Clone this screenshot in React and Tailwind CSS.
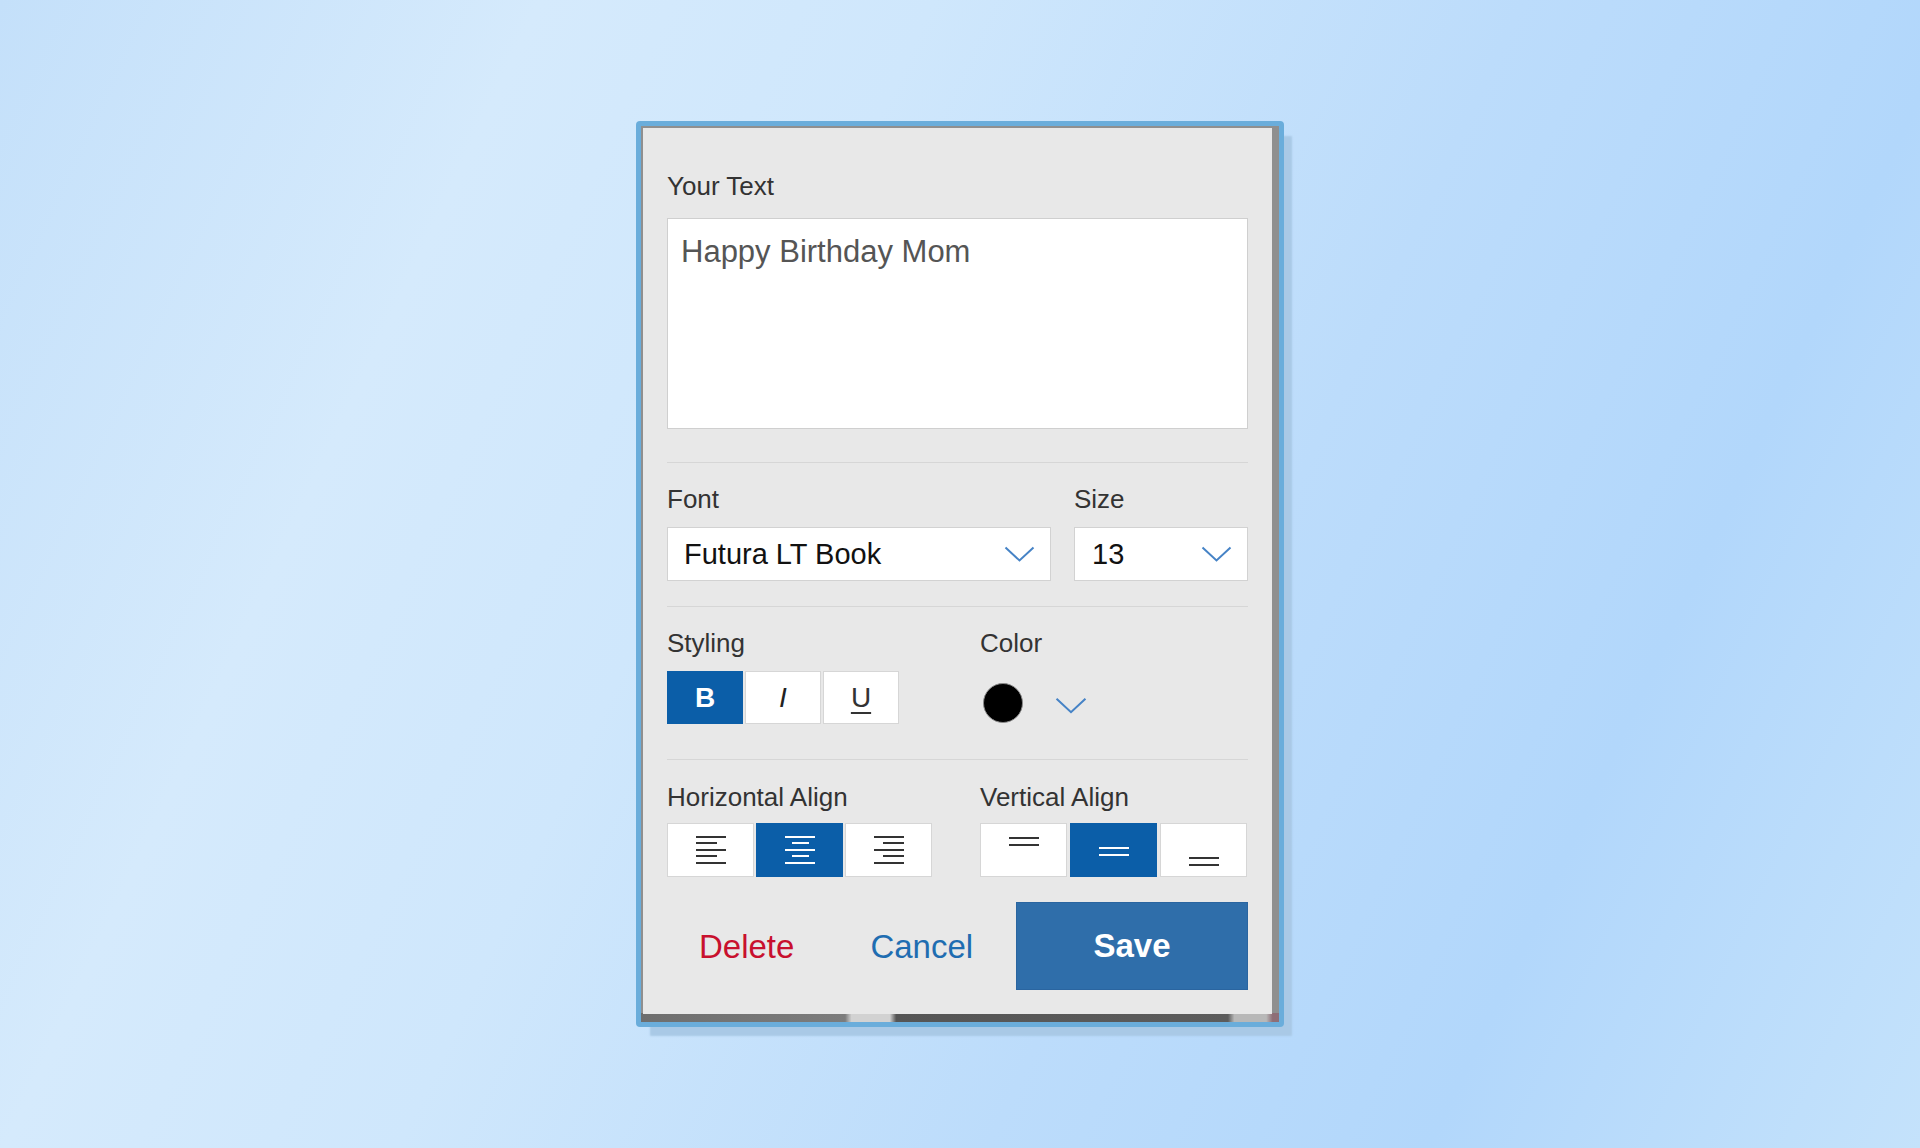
import React, { useState } from 'react';

const font = "font-['Liberation_Sans',Arial,Helvetica,sans-serif]";

function Chevron({ className = 'w-[31px] h-[16px]' }) {
  return (
    <svg className={className} viewBox="0 0 31 16" fill="none">
      <polyline points="1.5,1.5 15.5,14.5 29.5,1.5" stroke="#4683c6" strokeWidth="2" />
    </svg>
  );
}

// horizontal align glyphs: five bars, long/short alternating
function HAlignIcon({ kind, active }) {
  const c = active ? '#ffffff' : '#333333';
  const rows = [1, 7, 14, 20, 27];
  const short = kind === 'center' ? 17 : 21;
  return (
    <svg width="30" height="28" viewBox="0 0 30 28" shapeRendering="crispEdges">
      {rows.map((y, i) => {
        const long = i % 2 === 0;
        const w = long ? 30 : short;
        let x = 0;
        if (!long && kind === 'center') x = (30 - w) / 2;
        if (!long && kind === 'right') x = 30 - w;
        return <line key={i} x1={x} x2={x + w} y1={y} y2={y} stroke={c} strokeWidth="2" />;
      })}
    </svg>
  );
}

function VAlignIcon({ kind, active }) {
  const c = active ? '#ffffff' : '#333333';
  const ys = kind === 'top' ? [15, 22] : kind === 'middle' ? [25, 32] : [35, 42];
  return (
    <svg width="30" height="54" viewBox="0 0 30 54" shapeRendering="crispEdges">
      {ys.map((y) => (
        <line key={y} x1="0" x2="30" y1={y} y2={y} stroke={c} strokeWidth="2" />
      ))}
    </svg>
  );
}

function Label({ children }) {
  return <div className="text-[26px] leading-[26px] text-[#333]">{children}</div>;
}

export default function App() {
  const [text, setText] = useState('Happy Birthday Mom');
  const [hAlign, setHAlign] = useState('center');
  const [vAlign, setVAlign] = useState('middle');

  const seg = 'h-[54px] w-[87px] flex items-center justify-center border';
  const on = 'bg-[#0b5ea8] border-[#0b5ea8]';
  const off = 'bg-white border-[#d6d6d6]';

  return (
    <div
      className={`${font} w-full h-[1148px] flex items-center justify-center bg-[linear-gradient(115deg,#c4e0fa_0%,#d5eafc_22%,#cfe7fc_38%,#bcdcfb_62%,#b2d7fb_80%,#c4e2fb_100%)]`}
    >
      {/* blue frame around the screenshot */}
      <div className="w-[648px] h-[906px] rounded-[4px] bg-[#6aaddb] p-[5px] shadow-[11px_12px_2px_-3px_#a9c9e6]">
        {/* photo peeking out behind the dialog */}
        <div className="w-full h-full pl-[2px] pt-[2px] pr-[7px] pb-[8px] bg-[#8f8f8f] bg-no-repeat bg-bottom bg-[length:100%_9px] bg-[image:linear-gradient(90deg,#6e6e6e_0%,#7c7c7c_32%,#d2d2d2_33%,#d2d2d2_39%,#555_40%,#5c5c5c_92%,#b8b8b8_93%,#b8b8b8_98%,#8e6e76_99%)]">
          <div className="w-full h-full bg-[#e8e8e8] px-[24px] pt-[45px] pb-[23px] flex flex-col">
            <Label>Your Text</Label>
            <textarea
              value={text}
              onChange={(e) => setText(e.target.value)}
              className="mt-[19px] h-[211px] w-full resize-none border border-[#cfcfcf] bg-white pl-[13px] pt-[17px] text-[31px] leading-[31px] text-[#555] outline-none"
            />

            <div className="mt-[33px] h-px bg-[#d6d6d6]" />

            <div className="mt-[23px] flex gap-[23px]">
              <div className="w-[384px]">
                <Label>Font</Label>
                <div className="mt-[15px] h-[54px] flex items-center justify-between border border-[#d2d2d2] bg-white pl-[16px] pr-[15px]">
                  <span className="text-[29px] leading-[29px] text-[#111]">Futura LT Book</span>
                  <Chevron />
                </div>
              </div>
              <div className="flex-1">
                <Label>Size</Label>
                <div className="mt-[15px] h-[54px] flex items-center justify-between border border-[#d2d2d2] bg-white pl-[17px] pr-[15px]">
                  <span className="text-[29px] leading-[29px] text-[#111]">13</span>
                  <Chevron />
                </div>
              </div>
            </div>

            <div className="mt-[25px] h-px bg-[#d6d6d6]" />

            <div className="mt-[23px] flex">
              <div className="w-[313px]">
                <Label>Styling</Label>
                <div className="mt-[15px] flex gap-[2px]">
                  <button className="h-[53px] w-[76px] flex items-center justify-center bg-[#0b5ea8] text-[28px] font-bold text-white">
                    B
                  </button>
                  <button className="h-[53px] w-[76px] flex items-center justify-center border border-[#d6d6d6] bg-white text-[28px] italic text-[#222]">
                    I
                  </button>
                  <button className="h-[53px] w-[76px] flex items-center justify-center border border-[#d6d6d6] bg-white text-[28px] text-[#333] underline decoration-2 underline-offset-[5px]">
                    U
                  </button>
                </div>
              </div>
              <div className="flex-1">
                <Label>Color</Label>
                <div className="mt-[27px] ml-[3px] flex items-center gap-[32px]">
                  <span className="w-[40px] h-[40px] rounded-full bg-black border border-[#8a8a8a]" />
                  <Chevron className="w-[32px] h-[17px] mt-[4px]" />
                </div>
              </div>
            </div>

            <div className="mt-[35px] h-px bg-[#d6d6d6]" />

            <div className="mt-[24px] flex">
              <div className="w-[313px]">
                <Label>Horizontal Align</Label>
                <div className="mt-[13px] flex gap-[2px]">
                  {['left', 'center', 'right'].map((k) => (
                    <button key={k} onClick={() => setHAlign(k)} className={`${seg} ${hAlign === k ? on : off}`}>
                      <HAlignIcon kind={k} active={hAlign === k} />
                    </button>
                  ))}
                </div>
              </div>
              <div className="flex-1">
                <Label>Vertical Align</Label>
                <div className="mt-[13px] flex gap-[3px]">
                  {['top', 'middle', 'bottom'].map((k) => (
                    <button key={k} onClick={() => setVAlign(k)} className={`${seg} ${vAlign === k ? on : off}`}>
                      <VAlignIcon kind={k} active={vAlign === k} />
                    </button>
                  ))}
                </div>
              </div>
            </div>

            <div className="mt-[25px] flex items-center">
              <button className="ml-[32px] text-[33px] leading-[33px] text-[#c8102e]">Delete</button>
              <button className="ml-[76px] text-[33px] leading-[33px] text-[#1f6db1]">Cancel</button>
              <button className="ml-auto h-[88px] w-[232px] bg-[#2f6eaa] border border-[#2a65a0] text-[33px] font-bold text-white">
                Save
              </button>
            </div>
          </div>
        </div>
      </div>
    </div>
  );
}
